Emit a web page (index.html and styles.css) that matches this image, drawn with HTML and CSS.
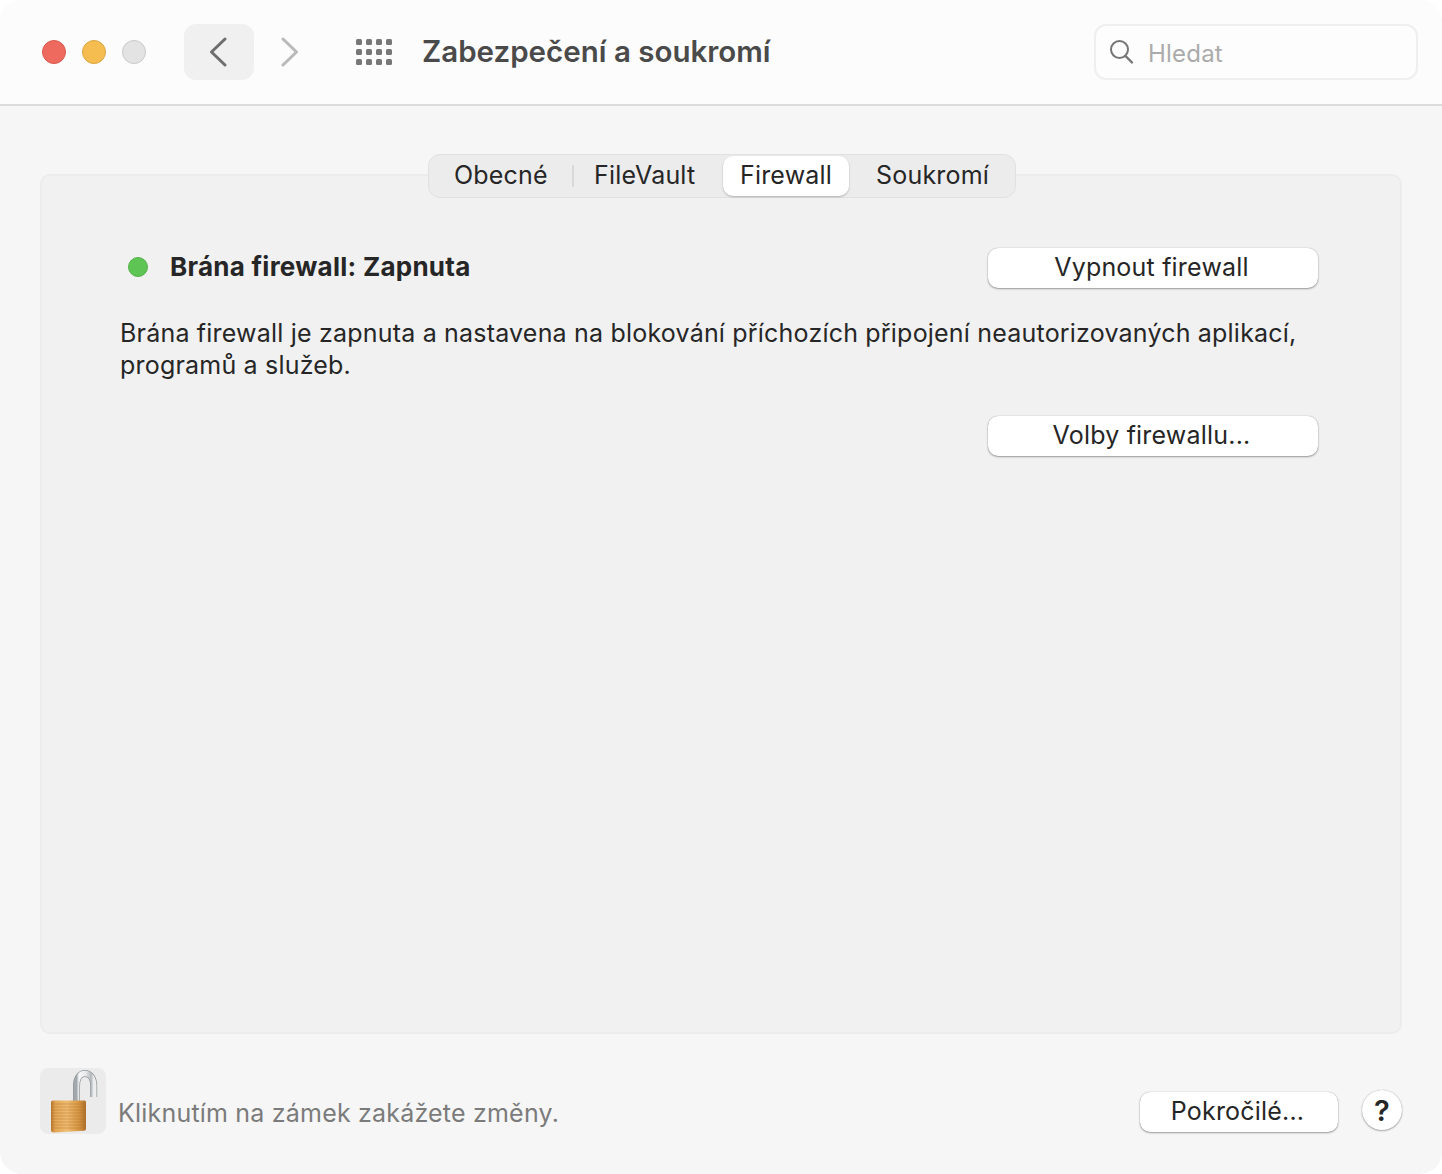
FILE: index.html
```html
<!DOCTYPE html>
<html lang="cs">
<head>
<meta charset="utf-8">
<title>Zabezpečení a soukromí</title>
<link rel="stylesheet" href="styles.css">
</head>
<body>
<div class="window">
  <header class="toolbar">
    <div class="lights">
      <span class="light red"></span>
      <span class="light yellow"></span>
      <span class="light gray"></span>
    </div>
    <div class="nav-back">
      <svg width="20" height="30" viewBox="0 0 20 30"><path d="M17 2 L3.500 15 L17 28" fill="none" stroke="#6e6e6e" stroke-width="3" stroke-linecap="round" stroke-linejoin="round"/></svg>
    </div>
    <div class="nav-forward">
      <svg width="20" height="30" viewBox="0 0 20 30"><path d="M3 2 L16.500 15 L3 28" fill="none" stroke="#b9b9b9" stroke-width="3" stroke-linecap="round" stroke-linejoin="round"/></svg>
    </div>
    <div class="grid-icon">
      <span></span><span></span><span></span><span></span>
      <span></span><span></span><span></span><span></span>
      <span></span><span></span><span></span><span></span>
    </div>
    <h1 class="title">Zabezpečení a soukromí</h1>
    <div class="search">
      <svg width="26" height="26" viewBox="0 0 26 26"><circle cx="10.500" cy="10.500" r="8.500" fill="none" stroke="#757575" stroke-width="2"/><path d="M16.500 17 L23 23.500" stroke="#757575" stroke-width="2.400" stroke-linecap="round"/></svg>
      <span class="search-text">Hledat</span>
    </div>
  </header>
  <main class="content">
    <section class="panel-wrap">
      <div class="tabs">
        <span class="tab tab-a">Obecné</span>
        <span class="tab-sep"></span>
        <span class="tab tab-b">FileVault</span>
        <span class="tab tab-active">Firewall</span>
        <span class="tab tab-d">Soukromí</span>
      </div>
      <div class="panel">
        <div class="status-row">
          <span class="dot"></span>
          <strong class="status">Brána firewall: Zapnuta</strong>
          <button class="btn btn-wide">Vypnout firewall</button>
        </div>
        <p class="desc">Brána firewall je zapnuta a nastavena na blokování příchozích připojení neautorizovaných aplikací, programů a služeb.</p>
        <div class="options-row">
          <button class="btn btn-wide">Volby firewallu...</button>
        </div>
      </div>
    </section>
    <footer class="footer">
      <div class="lock">
        <svg width="60" height="63" viewBox="0 0 60 63">
          <defs>
            <linearGradient id="shackle" x1="0" y1="0" x2="1" y2="0">
              <stop offset="0" stop-color="#a2a8ac"/>
              <stop offset="0.15" stop-color="#f6f7f8"/>
              <stop offset="0.55" stop-color="#e6e8ea"/>
              <stop offset="0.85" stop-color="#b2b7ba"/>
              <stop offset="1" stop-color="#eceeef"/>
            </linearGradient>
            <linearGradient id="body" x1="0" y1="0" x2="1" y2="0">
              <stop offset="0" stop-color="#b8762c"/>
              <stop offset="0.12" stop-color="#e3a655"/>
              <stop offset="0.45" stop-color="#efbb70"/>
              <stop offset="0.8" stop-color="#d69642"/>
              <stop offset="1" stop-color="#ad6d2c"/>
            </linearGradient>
          </defs>
          <path d="M35.500 31 V16 C35.500 8 39 3.500 44 3.500 C49 3.500 52.700 8 52.700 16 V27" fill="none" stroke="#92979b" stroke-width="7"/>
          <path d="M35.500 31 V16 C35.500 8 39 3.500 44 3.500 C49 3.500 52.700 8 52.700 16 V27" fill="none" stroke="url(#shackle)" stroke-width="5.500"/>
          <path d="M10 32 Q10 30.500 12 30.500 H43.500 Q45 30.500 45 32 V59 Q45 60.500 43 60.800 L13 62.500 Q10 62.500 10 60 Z" fill="url(#body)"/>
          <path d="M10 34 H45 M10 37 H45 M10 40 H45 M10 43 H45 M10 46 H45 M10 49 H45 M10 52 H45 M10 55 H45 M10 58 H45" stroke="#a66c2a" stroke-opacity=".38" stroke-width="1"/>
        </svg>
      </div>
      <span class="lock-text">Kliknutím na zámek zakážete změny.</span>
      <button class="btn btn-advanced">Pokročilé...</button>
      <button class="help">?</button>
    </footer>
  </main>
</div>
</body>
</html>
```
FILE: styles.css
```css
* { box-sizing: border-box; }
html, body { margin: 0; padding: 0; background: #fff; }
body { width: 1442px; height: 1174px; font-family: Inter, "Liberation Sans", sans-serif; color: #262626; overflow: hidden; letter-spacing: .2px; }
.window { width: 1442px; height: 1174px; border-radius: 22px; overflow: hidden; background: #f6f6f6; display: flex; flex-direction: column; }

.toolbar { flex: none; height: 106px; background: #fcfcfc; border-bottom: 2px solid #dcdcdc; display: flex; align-items: center; padding: 0 24px 0 42px; }
.lights { display: flex; gap: 16px; width: 142px; flex: none; }
.light { width: 24px; height: 24px; border-radius: 50%; border: 1px solid; }
.red { background: #ee6a5f; border-color: #d9594f; }
.yellow { background: #f5bd4f; border-color: #d9a441; }
.gray { background: #e3e3e3; border-color: #c9c9c9; }
.nav-back { width: 70px; height: 56px; flex: none; border-radius: 12px; background: #f0f0f0; display: flex; align-items: center; justify-content: center; padding-right: 3px; }
.nav-back svg, .nav-forward svg { display: block; }
.nav-forward { width: 20px; height: 30px; margin-left: 26px; flex: none; }
.grid-icon { width: 36px; margin-left: 56px; flex: none; display: grid; grid-template-columns: repeat(4, 5.5px); grid-auto-rows: 5.5px; gap: 4.5px; }
.grid-icon span { background: #777; border-radius: 1.5px; }
.title { margin: 0 0 2px 30px; font-size: 29.5px; line-height: 36px; font-weight: 600; color: #4a4a4a; letter-spacing: 0; white-space: nowrap; flex: 1; }
.search { width: 324px; height: 56px; flex: none; border: 2px solid #efefef; border-radius: 12px; background: #fdfdfd; display: flex; align-items: center; padding-left: 13px; gap: 13px; }
.search svg { flex: none; }
.search-text { font-size: 24px; color: #ababab; line-height: 30px; padding-top: 4px; }

.content { flex: 1; display: flex; flex-direction: column; padding: 48px 40px 0; }
.panel-wrap { position: relative; flex: none; padding-top: 20px; }
.tabs { position: absolute; top: 0; left: 388px; width: 588px; height: 44px; background: #ececec; border: 1px solid #e1e1e1; border-radius: 12px; display: flex; align-items: center; font-size: 25px; color: #262626; padding: 0 0 0 25px; z-index: 1; }
.tab { white-space: nowrap; line-height: 38px; padding-bottom: 2px; }
.tab-a { width: 118px; }
.tab-sep { width: 2px; height: 22px; background: #d8d8d8; }
.tab-b { margin-left: 20px; width: 129px; }
.tab-active { width: 126px; height: 40px; text-align: center; background: #fff; border-radius: 10px; box-shadow: 0 1px 2px rgba(0,0,0,.25); }
.tab-d { margin-left: 27px; }
.panel { height: 860px; background: #f1f1f1; border: 2px solid #ececec; border-radius: 10px; padding: 72px 82px 0 78px; }
.status-row { display: flex; align-items: center; height: 40px; padding-left: 8px; }
.dot { width: 20px; height: 20px; border-radius: 50%; background: #5ec454; border: 1px solid #54b34b; flex: none; margin-bottom: 2px; }
.status { margin-left: 22px; font-size: 26px; font-weight: 700; color: #262626; white-space: nowrap; flex: 1; padding-bottom: 4px; letter-spacing: .26px; }
.btn { height: 40px; background: #fff; border: 0; border-radius: 10px; font-family: inherit; font-size: 25px; letter-spacing: .2px; color: #262626; padding: 0 3px 2px 0; box-shadow: 0 0 1px rgba(0,0,0,.35), 0 1px 2px rgba(0,0,0,.35); }
.btn-wide { width: 330px; flex: none; }
.desc { margin: 29px 0 0; font-size: 25px; line-height: 32px; color: #262626; width: 1190px; }
.options-row { display: flex; justify-content: flex-end; margin-top: 35px; }

.footer { flex: 1; display: flex; align-items: flex-start; }
.lock { width: 66px; height: 66px; margin-top: 34px; flex: none; background: #ebebeb; border-radius: 8px; display: flex; align-items: flex-end; justify-content: flex-start; padding: 0 0 1px 1px; }
.lock svg { display: block; flex: none; }
.lock-text { margin: 62px 0 0 12px; font-size: 25px; line-height: 34px; color: #7b7b7b; flex: 1; white-space: nowrap; }
.btn-advanced { width: 198px; margin-top: 58px; flex: none; }
.help { width: 40px; height: 40px; margin: 56px 0 0 24px; flex: none; border: 0; border-radius: 50%; background: #fff; font-family: inherit; font-size: 29px; font-weight: 600; color: #262626; padding: 0; box-shadow: 0 0 1px rgba(0,0,0,.35), 0 1px 2px rgba(0,0,0,.3); }
```
